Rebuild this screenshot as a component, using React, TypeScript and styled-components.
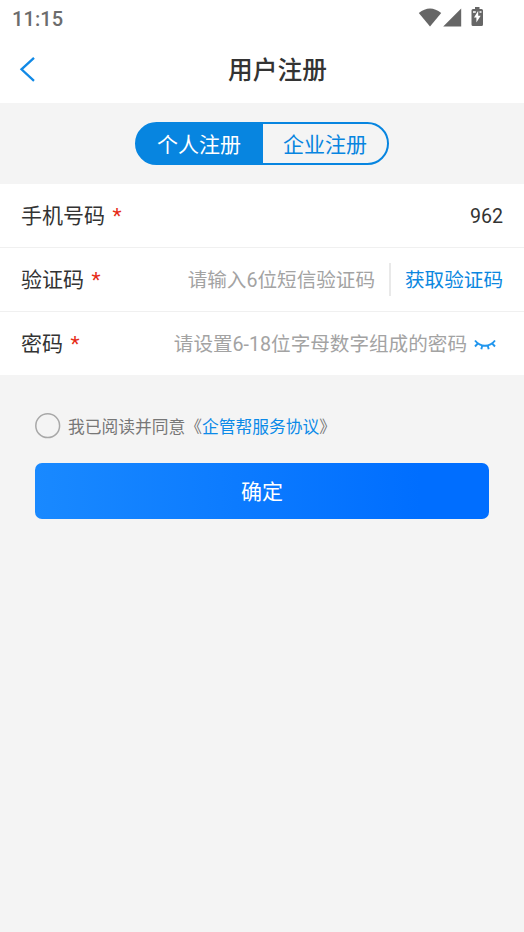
import React, { useState } from 'react';
import styled, { createGlobalStyle } from 'styled-components';

const GlobalStyle = createGlobalStyle`
  * { box-sizing: border-box; }
  body {
    margin: 0;
    background: #f4f4f4;
    font-family: Roboto, 'Noto Sans CJK SC', sans-serif;
    color: #333;
  }
  button {
    margin: 0;
    padding: 0;
    border: 0;
    background: none;
    font: inherit;
    cursor: pointer;
  }
`;

const Screen = styled.main`
  display: flex;
  flex-direction: column;
  width: 100%;
  min-height: 932px;
  background: #f4f4f4;
`;

const StatusBar = styled.div`
  display: flex;
  align-items: center;
  justify-content: space-between;
  height: 36px;
  padding: 0 40px 0 12px;
  background: #fff;
`;

const Clock = styled.span`
  padding-top: 1px;
  font-size: 20px;
  line-height: 24px;
  font-weight: 500;
  letter-spacing: 0.1px;
  color: #6c6c6c;
`;

const StatusIcons = styled.svg`
  display: block;
  width: 66px;
  height: 36px;
`;

const TitleBar = styled.header`
  display: grid;
  grid-template-columns: 64px 1fr 64px;
  align-items: center;
  height: 67px;
  background: #fff;
`;

const BackButton = styled.button`
  display: flex;
  padding: 0 0 1px 19px;
`;

const Title = styled.h1`
  margin: 0;
  padding: 2px 0 0 31px;
  text-align: center;
  font-size: 24.7px;
  line-height: 36px;
  font-weight: 500;
`;

const TabArea = styled.div`
  display: flex;
  justify-content: center;
  padding: 19px 0;
`;

const Segmented = styled.div<{ $active: number }>`
  display: flex;
  width: 254px;
  height: 43px;
  overflow: hidden;
  border: 2px solid #0785e0;
  border-radius: 22px;
  background: linear-gradient(
      ${({ $active }) => ($active === 0 ? '90deg' : '270deg')},
      #0785e0 128px,
      #f4f4f4 128px
    )
    border-box;
`;

const Segment = styled.button<{ $active: boolean }>`
  && {
    flex: 1;
    padding: 3px 1px 0 0;
    font-size: 21px;
    line-height: 36px;
    color: ${({ $active }) => ($active ? '#fff' : '#0785e0')};
  }
  &&:last-child {
    padding: 3px 0 0 1px;
  }
`;

const Form = styled.section`
  background: #fff;
`;

const Row = styled.div`
  display: flex;
  align-items: center;
  height: 64px;
  padding: 0 21px;
  border-bottom: 1px solid #f0f0f0;
  &:last-child {
    height: 63px;
    border-bottom: 0;
  }
`;

const Label = styled.span`
  flex: 1;
  font-size: 21px;
  line-height: 32px;
`;

const Required = styled.span`
  margin-left: 7.5px;
  color: #e62b17;
`;

const Value = styled.span`
  padding-top: 2px;
  font-size: 19.6px;
  line-height: 30px;
`;

const Hint = styled(Value)`
  color: #a3a3a3;
`;

const Divider = styled.span`
  width: 2px;
  height: 33px;
  margin: 0 14px;
  background: #e9e9e9;
`;

const CodeButton = styled.button`
  && {
    padding-top: 2px;
    font-size: 19.6px;
    line-height: 30px;
    color: #0b87e0;
  }
`;

const EyeButton = styled.button`
  && {
    display: flex;
    margin: 3px 7px 0;
  }
`;

const Agreement = styled.div`
  display: flex;
  align-items: center;
  height: 26px;
  margin: 38px 35px 0;
  font-size: 16.75px;
  color: #777;
`;

const RadioButton = styled.button`
  && {
    display: flex;
    margin: 0 7px 1px 0;
  }
`;

const Link = styled.span`
  color: #0b8ae8;
`;

const Submit = styled.button`
  && {
    height: 56px;
    margin: 24px 35px 0;
    padding-top: 2px;
    border-radius: 7px;
    background: linear-gradient(90deg, #1989ff, #006eff 85%);
    font-size: 21px;
    line-height: 54px;
    color: #fff;
  }
`;

const TABS = ['个人注册', '企业注册'];

const FieldLabel = ({ text }: { text: string }) => (
  <Label>
    {text}
    <Required>*</Required>
  </Label>
);

export default function App() {
  const [tab, setTab] = useState(0);

  return (
    <Screen>
      <GlobalStyle />
      <StatusBar>
        <Clock>11:15</Clock>
        <StatusIcons viewBox="0 0 66 36" fill="#666">
          <path d="M.8 13Q12 4 23.200 13L12 26.500Z" />
          <path d="M43.200 8.500V26.500H25.200Z" />
          <path d="M57 7h4.500v2h2q1.500 0 1.500 1.500v14q0 1.500-1.500 1.500h-8.500q-1.500 0-1.500-1.500v-14q0-1.500 1.500-1.500h2z" />
          <path d="M60.200 10.800 56 17.500h2.400v5l4.300-6.700h-2.500zM55 11.300h2.800v1.500H55zM61.500 11.300h2v1.500h-2z" fill="#fff" />
        </StatusIcons>
      </StatusBar>
      <TitleBar>
        <BackButton aria-label="返回">
          <svg width="18" height="26" viewBox="0 0 18 26" fill="none" stroke="#1189e6" strokeWidth="2.300">
            <path d="M15 1.800 2.500 13.300 15 24.800" />
          </svg>
        </BackButton>
        <Title>用户注册</Title>
      </TitleBar>
      <TabArea>
        <Segmented $active={tab}>
          {TABS.map((name, i) => (
            <Segment key={name} $active={i === tab} onClick={() => setTab(i)}>
              {name}
            </Segment>
          ))}
        </Segmented>
      </TabArea>
      <Form>
        <Row>
          <FieldLabel text="手机号码" />
          <Value>962</Value>
        </Row>
        <Row>
          <FieldLabel text="验证码" />
          <Hint>请输入6位短信验证码</Hint>
          <Divider />
          <CodeButton>获取验证码</CodeButton>
        </Row>
        <Row>
          <FieldLabel text="密码" />
          <Hint>请设置6-18位字母数字组成的密码</Hint>
          <EyeButton aria-label="显示密码">
            <svg width="22" height="12" viewBox="0 0 22 12" fill="none" stroke="#2196ee" strokeWidth="1.900">
              <path d="M1 1.500Q5 6.700 11 6.700T21 1.500M3.800 4.500 1 7.500M8.300 6.500 7.300 10.300M13.700 6.500 14.700 10.300M18.200 4.500 21 7.500" />
            </svg>
          </EyeButton>
        </Row>
      </Form>
      <Agreement>
        <RadioButton aria-label="同意协议">
          <svg width="26" height="26" viewBox="0 0 26 26" fill="none" stroke="#a8a8a8" strokeWidth="1.500">
            <circle cx="12.700" cy="12.700" r="11.900" />
          </svg>
        </RadioButton>
        <span>
          我已阅读并同意《<Link>企管帮服务协议</Link>》
        </span>
      </Agreement>
      <Submit>确定</Submit>
    </Screen>
  );
}
